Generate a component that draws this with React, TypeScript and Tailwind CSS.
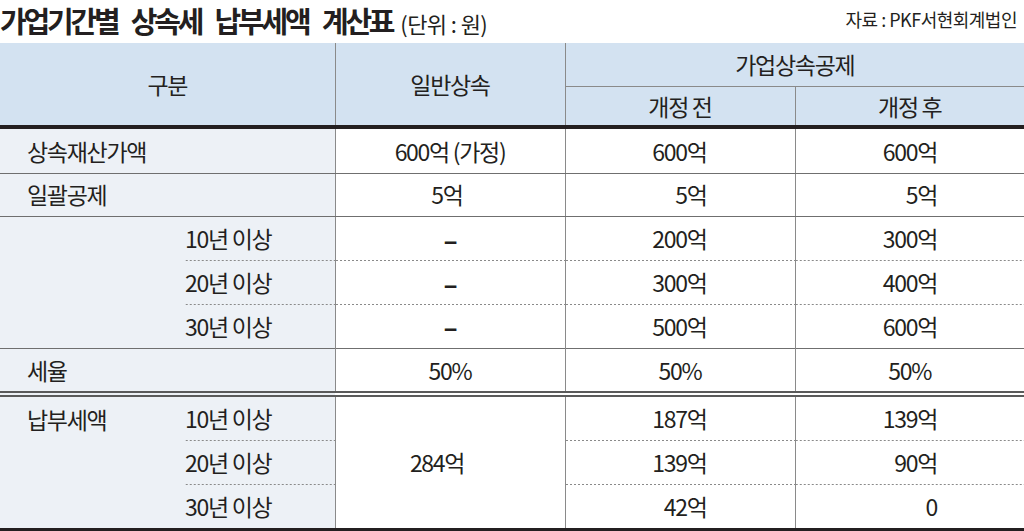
export default function App() {
  const dot =
    "bg-[linear-gradient(to_right,#8a8a8a_2px,transparent_2px)] bg-[length:4px_1px] bg-repeat-x bg-top";

  return (
    <div className="w-[1024px] h-[531px] overflow-hidden bg-white text-[#231f20] font-['Noto_Sans_CJK_KR','Noto_Sans',sans-serif]">
      {/* title */}
      <div className="h-[43px] flex items-start justify-between">
        <div className="flex items-baseline pt-[3px]">
          <h1 className="text-[29px] leading-[34px] font-bold tracking-[-3.2px] [word-spacing:10px]">
            가업기간별 상속세 납부세액 계산표
          </h1>
          <span className="ml-[8px] text-[22px] tracking-[-0.6px]">(단위 : 원)</span>
        </div>
        <div className="pt-[6px] pr-[7px] text-[18px] leading-[26px] tracking-[-0.5px]">
          자료 : PKF서현회계법인
        </div>
      </div>

      <table className="w-[1024px] table-fixed border-collapse text-[23px] tracking-[-1.3px]">
        <colgroup>
          <col className="w-[185px]" />
          <col className="w-[150px]" />
          <col className="w-[230px]" />
          <col className="w-[230px]" />
          <col className="w-[229px]" />
        </colgroup>
        <thead>
          <tr className="h-[43px]">
            <th colSpan={2} rowSpan={2} className="bg-[#d3e2f1] font-normal border-r border-r-[#8a8a8a] border-b-4 border-b-[#231f20]">
              구분
            </th>
            <th rowSpan={2} className="bg-[#d3e2f1] font-normal border-r border-r-[#8a8a8a] border-b-4 border-b-[#231f20]">
              일반상속
            </th>
            <th colSpan={2} className="bg-[#d3e2f1] font-normal border-b border-b-[#8a8a8a]">
              가업상속공제
            </th>
          </tr>
          <tr className="h-[41px]">
            <th className="bg-[#d3e2f1] font-normal border-r border-r-[#8a8a8a] border-b-4 border-b-[#231f20]">
              개정 전
            </th>
            <th className="bg-[#d3e2f1] font-normal border-b-4 border-b-[#231f20]">개정 후</th>
          </tr>
        </thead>
        <tbody>
          <tr className="h-[46px]">
            <td colSpan={2} className="bg-[#edf1f6] pl-[27px] border-r border-r-[#8a8a8a] border-b border-b-[#6f6f6f]">
              상속재산가액
            </td>
            <td className="text-center border-r border-r-[#8a8a8a] border-b border-b-[#6f6f6f]">600억 (가정)</td>
            <td className="text-right pr-[88px] border-r border-r-[#8a8a8a] border-b border-b-[#6f6f6f]">600억</td>
            <td className="text-right pr-[87px] border-b border-b-[#6f6f6f]">600억</td>
          </tr>
          <tr className="h-[43px]">
            <td colSpan={2} className="bg-[#edf1f6] pl-[27px] border-r border-r-[#8a8a8a] border-b border-b-[#6f6f6f]">
              일괄공제
            </td>
            <td className="text-center pr-[6px] border-r border-r-[#8a8a8a] border-b border-b-[#6f6f6f]">5억</td>
            <td className="text-right pr-[88px] border-r border-r-[#8a8a8a] border-b border-b-[#6f6f6f]">5억</td>
            <td className="text-right pr-[87px] border-b border-b-[#6f6f6f]">5억</td>
          </tr>

          {/* 공제 한도 */}
          <tr className="h-[44px]">
            <td rowSpan={3} className="bg-[#edf1f6] border-b border-b-[#6f6f6f]" />
            <td className="bg-[#edf1f6] border-r border-r-[#8a8a8a]">10년 이상</td>
            <td className="text-center text-[26px] font-bold border-r border-r-[#8a8a8a]">–</td>
            <td className="text-right pr-[88px] border-r border-r-[#8a8a8a]">200억</td>
            <td className="text-right pr-[87px]">300억</td>
          </tr>
          <tr className="h-[44px]">
            <td className={`bg-[#edf1f6] border-r border-r-[#8a8a8a] ${dot}`}>20년 이상</td>
            <td className={`text-center text-[26px] font-bold border-r border-r-[#8a8a8a] ${dot}`}>–</td>
            <td className={`text-right pr-[88px] border-r border-r-[#8a8a8a] ${dot}`}>300억</td>
            <td className={`text-right pr-[87px] ${dot}`}>400억</td>
          </tr>
          <tr className="h-[44px]">
            <td className={`bg-[#edf1f6] border-r border-r-[#8a8a8a] border-b border-b-[#6f6f6f] ${dot}`}>30년 이상</td>
            <td className={`text-center text-[26px] font-bold border-r border-r-[#8a8a8a] border-b border-b-[#6f6f6f] ${dot}`}>–</td>
            <td className={`text-right pr-[88px] border-r border-r-[#8a8a8a] border-b border-b-[#6f6f6f] ${dot}`}>500억</td>
            <td className={`text-right pr-[87px] border-b border-b-[#6f6f6f] ${dot}`}>600억</td>
          </tr>

          <tr className="h-[46px]">
            <td colSpan={2} className="bg-[#edf1f6] pl-[27px] border-r border-r-[#8a8a8a] border-b-[6px] border-double border-b-[#5a5a5a]">
              세율
            </td>
            <td className="text-center border-r border-r-[#8a8a8a] border-b-[6px] border-double border-b-[#5a5a5a]">50%</td>
            <td className="text-center border-r border-r-[#8a8a8a] border-b-[6px] border-double border-b-[#5a5a5a]">50%</td>
            <td className="text-center border-b-[6px] border-double border-b-[#5a5a5a]">50%</td>
          </tr>

          {/* 납부세액 */}
          <tr className="h-[46px]">
            <td rowSpan={3} className="bg-[#edf1f6] align-top pl-[27px] border-b-[3px] border-b-[#231f20]">
              <div className="h-[44px] flex items-center">납부세액</div>
            </td>
            <td className="bg-[#edf1f6] border-r border-r-[#8a8a8a]">10년 이상</td>
            <td rowSpan={3} className="text-center pr-[26px] border-r border-r-[#8a8a8a] border-b-[3px] border-b-[#231f20]">
              284억
            </td>
            <td className="text-right pr-[88px] border-r border-r-[#8a8a8a]">187억</td>
            <td className="text-right pr-[87px]">139억</td>
          </tr>
          <tr className="h-[44px]">
            <td className={`bg-[#edf1f6] border-r border-r-[#8a8a8a] ${dot}`}>20년 이상</td>
            <td className={`text-right pr-[88px] border-r border-r-[#8a8a8a] ${dot}`}>139억</td>
            <td className={`text-right pr-[87px] ${dot}`}>90억</td>
          </tr>
          <tr className="h-[45px]">
            <td className={`bg-[#edf1f6] border-r border-r-[#8a8a8a] border-b-[3px] border-b-[#231f20] ${dot}`}>30년 이상</td>
            <td className={`text-right pr-[88px] border-r border-r-[#8a8a8a] border-b-[3px] border-b-[#231f20] ${dot}`}>42억</td>
            <td className={`text-right pr-[87px] border-b-[3px] border-b-[#231f20] ${dot}`}>0</td>
          </tr>
        </tbody>
      </table>
    </div>
  );
}
